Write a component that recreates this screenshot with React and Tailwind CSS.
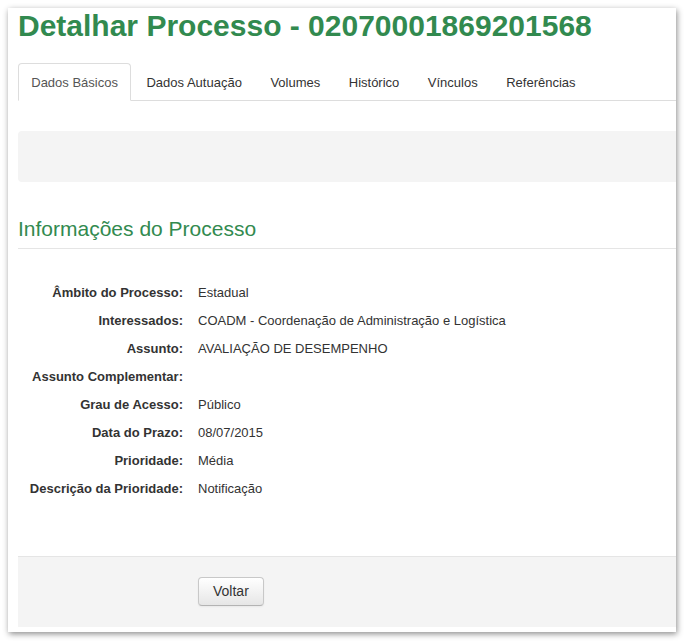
import React from "react";

const tabs = ["Dados Básicos", "Dados Autuação", "Volumes", "Histórico", "Vínculos", "Referências"];

const fields = [
  ["Âmbito do Processo:", "Estadual"],
  ["Interessados:", "COADM - Coordenação de Administração e Logística"],
  ["Assunto:", "AVALIAÇÃO DE DESEMPENHO"],
  ["Assunto Complementar:", ""],
  ["Grau de Acesso:", "Público"],
  ["Data do Prazo:", "08/07/2015"],
  ["Prioridade:", "Média"],
  ["Descrição da Prioridade:", "Notificação"],
];

export default function App() {
  return (
    <div className="w-[684px] h-[641px] bg-white pt-2 pl-2 font-['Liberation_Sans',Arial,sans-serif] text-[#333]">
      <div className="w-[668px] h-[624px] bg-white overflow-hidden pl-[10px] shadow-[1px_2px_6px_rgba(0,0,0,0.45)]">
        <div className="w-[700px]">
          {/* Title */}
          <h1 className="text-[30px] leading-[36px] font-bold text-[#328a4f]">
            Detalhar Processo - 02070001869201568
          </h1>

          {/* Tabs */}
          <ul className="mt-[19px] flex border-b border-[#ddd]">
            {tabs.map((t, i) => (
              <li
                key={t}
                className={
                  i === 0
                    ? "-mb-px mr-[2px] px-[12.25px] pt-[10px] pb-[8px] text-[13px] leading-[18px] text-[#555] bg-white border border-[#ddd] border-b-white rounded-t-[4px]"
                    : "-mb-px mr-[2px] px-[12.25px] pt-[10px] pb-[8px] text-[13px] leading-[18px] text-[#333] border border-transparent"
                }
              >
                {t}
              </li>
            ))}
          </ul>

          {/* Empty toolbar panel */}
          <div className="mt-[30px] h-[51px] bg-[#f4f4f4] rounded-l-[4px]" />

          {/* Section heading */}
          <h3 className="mt-[35px] pb-[7px] text-[21px] leading-[24px] text-[#328a4f] border-b border-[#e5e5e5]">
            Informações do Processo
          </h3>

          {/* Fields */}
          <dl className="mt-[30px] grid grid-cols-[165px_1fr] gap-x-[15px] text-[13px]">
            {fields.map(([label, value]) => (
              <React.Fragment key={label}>
                <dt className="h-[28px] flex items-center justify-end font-bold whitespace-nowrap">{label}</dt>
                <dd className="h-[28px] flex items-center">{value}</dd>
              </React.Fragment>
            ))}
          </dl>

          {/* Form actions */}
          <div className="mt-[53px] h-[71px] pt-[20px] bg-[#f4f4f4] border-t border-[#e5e5e5]">
            <button className="ml-[180px] h-[29px] px-[14px] text-[14px] text-[#333] rounded-[4px] border border-[#c8c8c8] border-b-[#b3b3b3] bg-linear-to-b from-white to-[#e6e6e6] shadow-[inset_0_1px_0_rgba(255,255,255,0.2),0_1px_2px_rgba(0,0,0,0.05)]">
              Voltar
            </button>
          </div>
        </div>
      </div>
    </div>
  );
}
